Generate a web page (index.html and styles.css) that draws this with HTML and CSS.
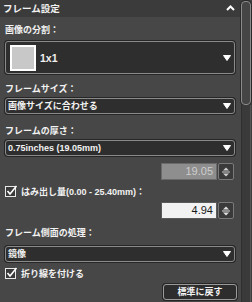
FILE: index.html
```html
<!DOCTYPE html>
<html lang="ja">
<head>
<meta charset="utf-8">
<link rel="stylesheet" href="styles.css">
</head>
<body>
<div class="app">
  <div class="panel">
    <div class="header">
      <span class="title">フレーム設定</span>
      <svg class="caret" width="9" height="6" viewBox="0 0 9 6"><path d="M1 5 L4.5 1.5 L8 5" fill="none" stroke="#fff" stroke-width="2"/></svg>
    </div>
    <div class="content">
      <div class="label l1">画像の分割：</div>
      <div class="select big">
        <div class="thumb"></div>
        <span class="val">1x1</span>
        <svg class="arrow" width="8" height="6" viewBox="0 0 8 6"><path d="M0.5 0.5 H7.5 L4 5.5 Z" fill="#fff" stroke="#fff" stroke-linejoin="round"/></svg>
      </div>
      <div class="label l2">フレームサイズ：</div>
      <div class="select small s2">
        <span class="val">画像サイズに合わせる</span>
        <svg class="arrow" width="8" height="6" viewBox="0 0 8 6"><path d="M0.5 0.5 H7.5 L4 5.5 Z" fill="#fff" stroke="#fff" stroke-linejoin="round"/></svg>
      </div>
      <div class="label l3">フレームの厚さ：</div>
      <div class="select small s3">
        <span class="val">0.75inches (19.05mm)</span>
        <svg class="arrow" width="8" height="6" viewBox="0 0 8 6"><path d="M0.5 0.5 H7.5 L4 5.5 Z" fill="#fff" stroke="#fff" stroke-linejoin="round"/></svg>
      </div>
      <div class="numrow n1">
        <div class="num disabled">19.05</div>
        <div class="spin">
          <svg width="14" height="14" viewBox="0 0 14 14"><path d="M4 5.5 L7 2.5 L10 5.5 Z" fill="#cfcfcf"/><path d="M3 7 H11" stroke="#cfcfcf" stroke-width="1"/><path d="M4 8.5 L7 11.5 L10 8.5 Z" fill="#cfcfcf"/></svg>
        </div>
      </div>
      <div class="check c1">
        <svg class="box" width="13" height="12" viewBox="0 0 13 12"><rect x="0.5" y="1.5" width="10" height="10" fill="#3a3a3a" stroke="#e8e8e8"/><path d="M2.5 6 L5 9 L11.5 1" fill="none" stroke="#fff" stroke-width="1.6"/></svg>
        <span>はみ出し量(0.00 - 25.40mm)：</span>
      </div>
      <div class="numrow n2">
        <div class="num">4.94</div>
        <div class="spin">
          <svg width="14" height="14" viewBox="0 0 14 14"><path d="M4 5.5 L7 2.5 L10 5.5 Z" fill="#e0e0e0"/><path d="M3 7 H11" stroke="#e0e0e0" stroke-width="1"/><path d="M4 8.5 L7 11.5 L10 8.5 Z" fill="#e0e0e0"/></svg>
        </div>
      </div>
      <div class="label l4">フレーム側面の処理：</div>
      <div class="select small s4">
        <span class="val">鏡像</span>
        <svg class="arrow" width="8" height="6" viewBox="0 0 8 6"><path d="M0.5 0.5 H7.5 L4 5.5 Z" fill="#fff" stroke="#fff" stroke-linejoin="round"/></svg>
      </div>
      <div class="check c2">
        <svg class="box" width="13" height="12" viewBox="0 0 13 12"><rect x="0.5" y="1.5" width="10" height="10" fill="#3a3a3a" stroke="#e8e8e8"/><path d="M2.5 6 L5 9 L11.5 1" fill="none" stroke="#fff" stroke-width="1.6"/></svg>
        <span>折り線を付ける</span>
      </div>
      <div class="btnrow">
        <div class="btn">標準に戻す</div>
      </div>
    </div>
  </div>
  <div class="scrollbar">
    <div class="sthumb"></div>
    <div class="strack"></div>
  </div>
</div>
</body>
</html>
```

FILE: styles.css
```css
* { box-sizing: border-box; }
html, body {
  margin: 0;
  padding: 0;
  width: 252px;
  height: 302px;
  overflow: hidden;
  background: #474747;
  font-family: "Liberation Sans", "Noto Sans CJK JP", sans-serif;
  font-weight: bold;
  font-size: 9px;
  color: #f2f2f2;
}
.app {
  display: flex;
  width: 252px;
  height: 302px;
}
.panel {
  width: 241px;
  display: flex;
  flex-direction: column;
}
.header {
  height: 17px;
  background: #3b3b3b;
  display: flex;
  align-items: center;
  justify-content: space-between;
  padding: 0 6px 0 3px;
}
.title {
  font-size: 9.5px;
  line-height: 12px;
}
.caret { margin-top: -1px; }
.content {
  padding: 0 6px 0 5px;
  display: flex;
  flex-direction: column;
}
.label {
  line-height: 12px;
  height: 12px;
  font-size: 9px;
}
.l1 { margin-top: 7px; }
.l2 { margin-top: 9px; }
.l3 { margin-top: 11px; }
.l4 { margin-top: 8px; }
.select {
  display: flex;
  align-items: center;
  background: #2e2e2e;
  border: 1px solid #8a8a8a;
  border-radius: 3px;
  box-shadow: 0 0 0 1px #262626;
}
.select .arrow {
  margin-left: auto;
  margin-right: 3px;
}
.big {
  margin-top: 5px;
  height: 33px;
  padding-left: 4px;
}
.thumb {
  width: 26px;
  height: 26px;
  background: #c8c8c8;
  border: 2px solid #ffffff;
}
.big .val {
  margin-left: 4px;
  font-size: 10.5px;
}
.small {
  height: 16px;
  padding-left: 2px;
}
.small .val {
  font-size: 9px;
  line-height: 14px;
}
.s2 { margin-top: 3px; }
.s3 { margin-top: 3px; }
.s4 { margin-top: 7px; }
.numrow {
  display: flex;
  justify-content: flex-end;
  align-items: center;
  gap: 1px;
  height: 17px;
  padding-right: 1px;
}
.n1 { margin-top: 7px; }
.n2 { margin-top: 5px; }
.num {
  width: 56px;
  height: 17px;
  border: 1px solid #5a5a5a;
  background: #f2f2f2;
  color: #1a1a1a;
  text-align: right;
  font-weight: normal;
  font-size: 11px;
  line-height: 15px;
  padding-right: 3px;
}
.num.disabled {
  background: #8e8e8e;
  color: #cdcdcd;
  border-color: #6a6a6a;
}
.spin {
  width: 16px;
  height: 17px;
  border: 1px solid #7a7a7a;
  border-radius: 2px;
  background: #3a3a3a;
  display: flex;
  align-items: center;
  justify-content: center;
}
.check {
  display: flex;
  align-items: center;
  height: 12px;
  gap: 3px;
  font-size: 9px;
}
.c1 { margin-top: 5px; }
.c2 { margin-top: 5px; }
.box { flex: none; }
.btnrow {
  display: flex;
  justify-content: flex-end;
  margin-top: 5px;
}
.btn {
  width: 74px;
  height: 16px;
  border: 1px solid #9a9a9a;
  border-radius: 3px;
  background: #2d2d2d;
  box-shadow: 0 0 0 1px #262626;
  text-align: center;
  line-height: 14px;
  font-size: 9px;
  margin-right: -2px;
}
.scrollbar {
  width: 11px;
  display: flex;
  flex-direction: column;
  padding: 1px 1px 0 0;
  background: #3e3e3e;
}
.sthumb {
  height: 104px;
  border: 1px solid #8a8a8a;
  border-radius: 4px;
  background: #454545;
  box-shadow: 0 0 0 1px #2a2a2a;
}
.strack {
  flex: 1;
  border-left: 1px solid #2f2f2f;
  border-right: 1px solid #555;
  background: #3a3a3a;
}
```
